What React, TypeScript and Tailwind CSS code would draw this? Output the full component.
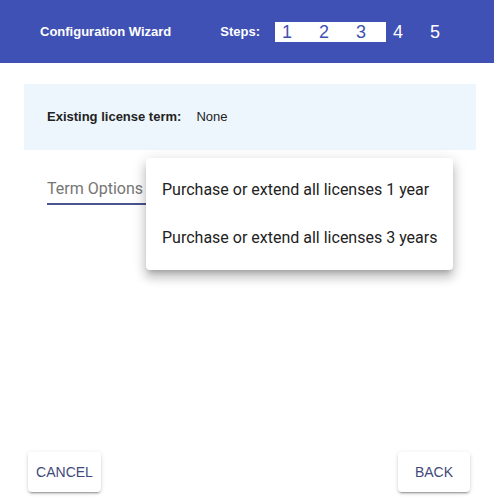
import React from 'react';

const steps = [1, 2, 3, 4, 5];
const current = 3;

const options = [
  'Purchase or extend all licenses 1 year',
  'Purchase or extend all licenses 3 years',
];

export default function App() {
  return (
    <div className="relative flex h-[497px] w-[494px] flex-col bg-white font-['Liberation_Sans',Arial,sans-serif]">
      {/* header */}
      <div className="flex h-[63px] shrink-0 items-center bg-[#3f51b5] pl-[40px]">
        <span className="text-[13px] font-bold text-white">Configuration Wizard</span>
        <span className="ml-[49px] text-[13px] font-bold text-white">Steps:</span>
        <div className="ml-[15px] flex h-[20px] items-center">
          {steps.map((s) => (
            <div
              key={s}
              className={
                s <= current
                  ? 'flex h-[20px] w-[37px] items-center bg-white pl-[7px] text-[18px] leading-none text-[#3f51b5]'
                  : 'flex h-[20px] w-[37px] items-center pl-[7px] text-[18px] leading-none text-white'
              }
            >
              {s}
            </div>
          ))}
        </div>
      </div>

      {/* body */}
      <div className="flex-1 pl-6 pr-[18px] pt-[21px]">
        <div className="flex h-[66px] items-center bg-[#eef6fd] pl-[23px] text-[13px] text-[#222]">
          <span className="font-bold">Existing license term:</span>
          <span className="ml-[15px]">None</span>
        </div>

        <div className="relative mt-[27px] pl-[23px] font-['Roboto',sans-serif]">
          <div className="inline-block w-[99px] border-b-2 border-[#4a5590] pb-[2px] text-[16px] leading-[24px] text-[#757575]">
            Term Options
          </div>

          <div className="absolute left-[122px] top-[-19px] w-[307px] rounded-[4px] bg-white py-2 shadow-[0_5px_5px_-3px_rgba(0,0,0,0.2),0_8px_10px_1px_rgba(0,0,0,0.14),0_3px_14px_2px_rgba(0,0,0,0.12)]">
            {options.map((o) => (
              <div key={o} className="flex h-[48px] items-center pl-4 text-[16px] text-[#222]">
                {o}
              </div>
            ))}
          </div>
        </div>
      </div>

      {/* footer */}
      <div className="flex shrink-0 items-center justify-between pb-[5px] pl-[28px] pr-[24px]">
        <button className="h-[40px] w-[73px] rounded-[4px] bg-white text-[14px] text-[#3f4a7a] shadow-[0_3px_1px_-2px_rgba(0,0,0,0.2),0_2px_2px_0_rgba(0,0,0,0.14),0_1px_5px_0_rgba(0,0,0,0.12)]">
          CANCEL
        </button>
        <button className="h-[40px] w-[72px] rounded-[4px] bg-white text-[14px] text-[#3f4a7a] shadow-[0_3px_1px_-2px_rgba(0,0,0,0.2),0_2px_2px_0_rgba(0,0,0,0.14),0_1px_5px_0_rgba(0,0,0,0.12)]">
          BACK
        </button>
      </div>
    </div>
  );
}
